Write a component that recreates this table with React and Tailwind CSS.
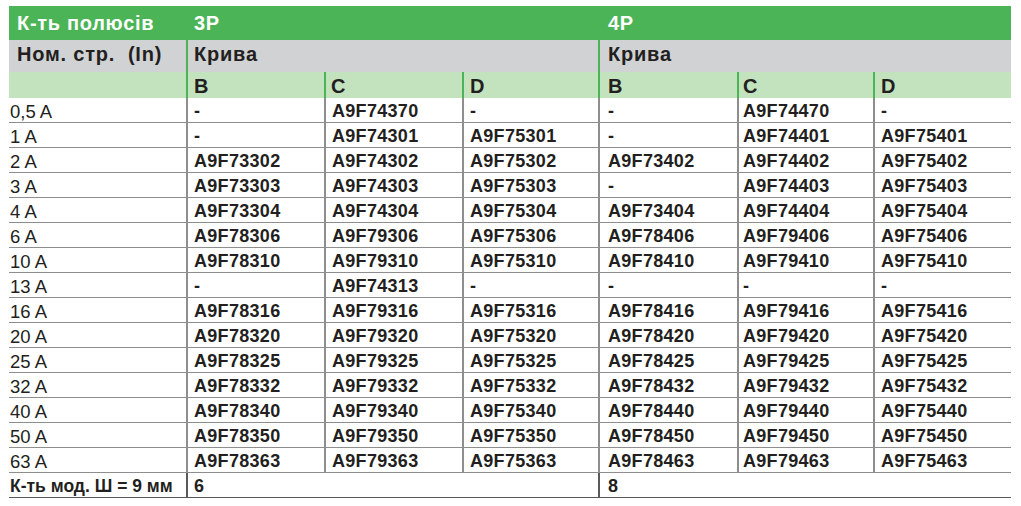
import React from 'react';

// --- DATA ---
const rows = [
  ['0,5 A', '-', 'A9F74370', '-', '-', 'A9F74470', '-'],
  ['1 A', '-', 'A9F74301', 'A9F75301', '-', 'A9F74401', 'A9F75401'],
  ['2 A', 'A9F73302', 'A9F74302', 'A9F75302', 'A9F73402', 'A9F74402', 'A9F75402'],
  ['3 A', 'A9F73303', 'A9F74303', 'A9F75303', '-', 'A9F74403', 'A9F75403'],
  ['4 A', 'A9F73304', 'A9F74304', 'A9F75304', 'A9F73404', 'A9F74404', 'A9F75404'],
  ['6 A', 'A9F78306', 'A9F79306', 'A9F75306', 'A9F78406', 'A9F79406', 'A9F75406'],
  ['10 A', 'A9F78310', 'A9F79310', 'A9F75310', 'A9F78410', 'A9F79410', 'A9F75410'],
  ['13 A', '-', 'A9F74313', '-', '-', '-', '-'],
  ['16 A', 'A9F78316', 'A9F79316', 'A9F75316', 'A9F78416', 'A9F79416', 'A9F75416'],
  ['20 A', 'A9F78320', 'A9F79320', 'A9F75320', 'A9F78420', 'A9F79420', 'A9F75420'],
  ['25 A', 'A9F78325', 'A9F79325', 'A9F75325', 'A9F78425', 'A9F79425', 'A9F75425'],
  ['32 A', 'A9F78332', 'A9F79332', 'A9F75332', 'A9F78432', 'A9F79432', 'A9F75432'],
  ['40 A', 'A9F78340', 'A9F79340', 'A9F75340', 'A9F78440', 'A9F79440', 'A9F75440'],
  ['50 A', 'A9F78350', 'A9F79350', 'A9F75350', 'A9F78450', 'A9F79450', 'A9F75450'],
  ['63 A', 'A9F78363', 'A9F79363', 'A9F75363', 'A9F78463', 'A9F79463', 'A9F75463'],
];

const cols = 'grid grid-cols-[177px_138px_138px_136px_139px_136px_138px]';
const line = 'border-l-2 border-[#4bb456]';

export default function App() {
  return (
    <div className="w-[1021px] h-[506px] bg-white pt-[6px] pl-[9px] text-[#231f20] font-['Liberation_Sans',Arial,sans-serif]">
      <div className="w-[1002px]">
        {/* POLES */}
        <div className={`${cols} h-[34px] bg-[#4bb456] text-white font-bold text-[20px] tracking-[0.7px] leading-[34px]`}>
          <div className="pl-[8px]">К-ть полюсів</div>
          <div className="col-span-3 pl-[8px]">3P</div>
          <div className="col-span-3 pl-[10px]">4P</div>
        </div>

        {/* CURVE */}
        <div className={`${cols} h-[32px] bg-[#d1d2d4] font-bold text-[20px] tracking-[0.8px] leading-[24px]`}>
          <div className="pl-[8px] pt-[2px] whitespace-nowrap">Ном. стр.&nbsp; (In)</div>
          <div className={`col-span-3 ${line} pl-[6px] pt-[2px]`}>Крива</div>
          <div className={`col-span-3 ${line} pl-[8px] pt-[2px]`}>Крива</div>
        </div>

        {/* B C D */}
        <div className={`${cols} h-[26px] bg-[#c3e3bf] font-bold text-[20px] leading-[28px]`}>
          <div />
          <div className={`${line} pl-[6px]`}>B</div>
          <div className={`${line} pl-[5px]`}>C</div>
          <div className={`${line} pl-[6px]`}>D</div>
          <div className={`${line} pl-[8px]`}>B</div>
          <div className={`${line} pl-[4px]`}>C</div>
          <div className={`${line} pl-[6px]`}>D</div>
        </div>

        {rows.map((r) => (
          <div key={r[0]} className={cols}>
            <div className="h-[25px] border-b border-[#8e8e8e] pl-[1px] pt-[3px] leading-[21px] text-[18.5px]">{r[0]}</div>
            {r.slice(1).map((v, i) => (
              <div
                key={i}
                className={`h-[25px] border-b border-[#8e8e8e] ${line} pt-[3px] leading-[21px] text-[18px] font-bold tracking-[0.3px] ${i === 3 ? 'pl-[8px]' : i === 4 ? 'pl-[4px]' : 'pl-[6px]'}`}
              >
                {v}
              </div>
            ))}
          </div>
        ))}

        {/* MODULES */}
        <div className={`${cols} h-[25px]`}>
          <div className="border-b border-[#5a5a5a] pl-[1px] pt-[3px] leading-[21px] text-[17.5px] font-bold whitespace-nowrap">К-ть мод. Ш = 9 мм</div>
          <div className={`col-span-3 border-b border-[#5a5a5a] ${line} pl-[6px] pt-[3px] leading-[21px] text-[18px] font-bold`}>6</div>
          <div className={`col-span-3 border-b border-[#5a5a5a] ${line} pl-[8px] pt-[3px] leading-[21px] text-[18px] font-bold`}>8</div>
        </div>
      </div>
    </div>
  );
}
